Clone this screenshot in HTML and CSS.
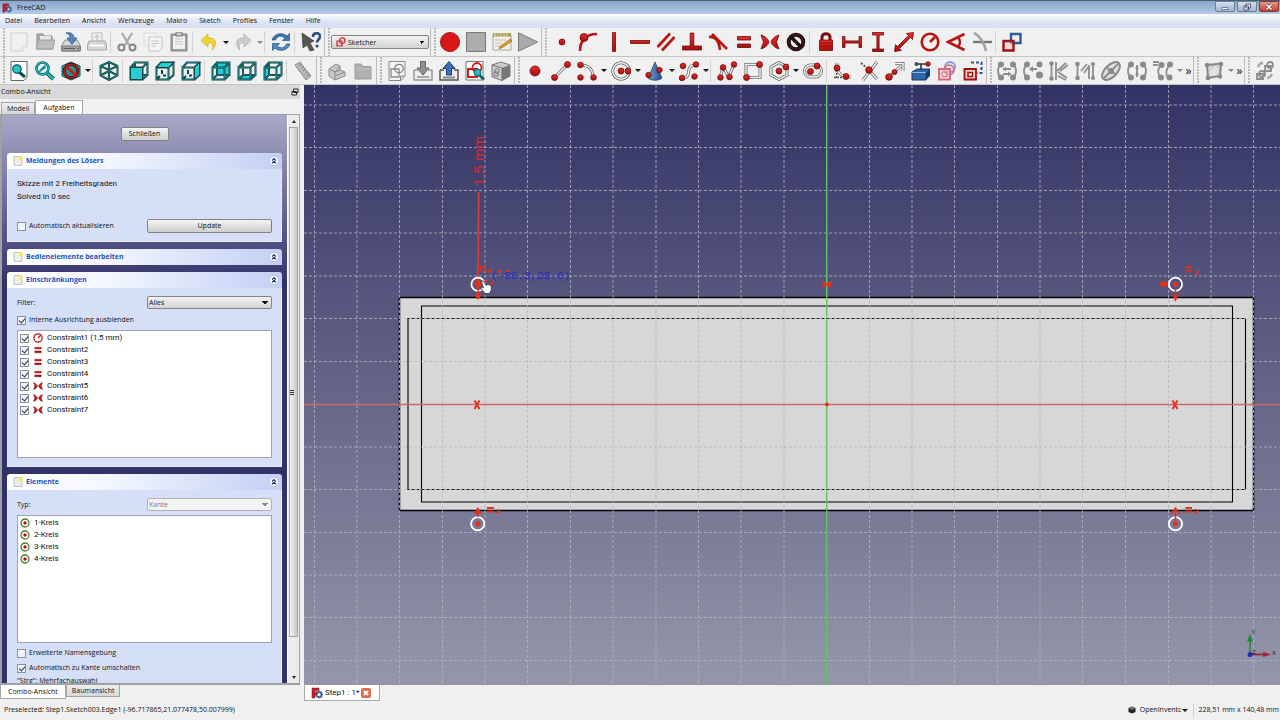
FILE: index.html
```html
<!DOCTYPE html>
<html lang="de">
<head>
<meta charset="utf-8">
<title>FreeCAD</title>
<link rel="stylesheet" href="styles.css">
</head>
<body>
<svg class="defs" aria-hidden="true">
  <defs>
    <linearGradient id="redg" x1="0" y1="0" x2="0" y2="1"><stop offset="0" stop-color="#ee2a2a"/><stop offset="1" stop-color="#a80c0c"/></linearGradient>
    <linearGradient id="blueg" x1="0" y1="0" x2="1" y2="0"><stop offset="0" stop-color="#6fa3d8"/><stop offset="1" stop-color="#1c4c86"/></linearGradient>
  </defs>
  <symbol id="logo" viewBox="0 0 12 12"><circle cx="8" cy="7.500" r="2.600" fill="none" stroke="#4a6a9c" stroke-width="2"/><path d="M8 3.500V5M8 10V11.500M4 7.500H5.500M10.500 7.500H12M5.200 4.700l1 1M10 9.500l1 1M10.800 4.700l-1 1" stroke="#4a6a9c" stroke-width="1.400"/><path d="M1 1H8V3.500H4V5.200H6V7.500H4V11H1Z" fill="#c4202c" stroke="#7a1018" stroke-width=".5"/></symbol>
  <symbol id="new" viewBox="0 0 20 20"><path d="M2 1H18V15L14 19H2Z" fill="#f0f0f0" stroke="#cfcfcf"/><path d="M14 19V15H18" fill="#fafafa" stroke="#d4d4d4"/></symbol>
  <symbol id="open" viewBox="0 0 20 20"><path d="M2 17V2H8L9 4H17V17Z" fill="#a9a9a9" stroke="#8c8c8c"/><path d="M5 8V4H16V9" fill="#e6e6e6"/><path d="M1 17L3 8H20L18 17Z" fill="#bdbdbd" stroke="#949494" stroke-width=".8"/></symbol>
  <symbol id="save" viewBox="0 0 20 20"><path d="M4 8H16L19.500 14V19H.5V14Z" fill="#d8d8d8" stroke="#777" stroke-width=".8"/><path d="M1 14H19V19H1Z" fill="#a5a5a5" stroke="#666" stroke-width=".7"/><path d="M2.500 16.500H14M16 16.500H17.500" stroke="#5c5c5c"/><path d="M5 1C10 0 13 2 13 6H16L11 12.500L6 6H9C9 3 8 2 5 1Z" fill="#5385bd" stroke="#2c5688" stroke-width=".7"/></symbol>
  <symbol id="print" viewBox="0 0 20 20"><path d="M5 1H15V10H5Z" fill="#eee" stroke="#bcbcbc"/><path d="M10 3V9M7.500 5.500L10 3L12.500 5.500" stroke="#b7b7b7" fill="none"/><path d="M2 9H18L19.500 13V18H.5V13Z" fill="#d5d5d5" stroke="#a8a8a8"/><path d="M3 13.500H17" stroke="#fff" stroke-width="2"/></symbol>
  <symbol id="cut" viewBox="0 0 20 20"><path d="M5 1L12 13M15 1L8 13" stroke="#aaa" stroke-width="2.200"/><circle cx="4.500" cy="15.500" r="3" fill="none" stroke="#858585" stroke-width="2"/><circle cx="15.500" cy="15.500" r="3" fill="none" stroke="#858585" stroke-width="2"/></symbol>
  <symbol id="copy" viewBox="0 0 20 20"><path d="M1 1H14V14H1Z" fill="#f1f1f1" stroke="#dcdcdc"/><path d="M6 5H19V16L16 19H6Z" fill="#f4f4f4" stroke="#c6c6c6"/><path d="M8.500 9H16M8.500 11.500H16M8.500 14H13" stroke="#c5c5c5"/></symbol>
  <symbol id="paste" viewBox="0 0 20 20"><path d="M2 2H18V19H2Z" fill="#9f9f9f" stroke="#868686"/><path d="M4 4H16V17H4Z" fill="#f0f0f0"/><path d="M7 0H13V4H7Z" fill="#c9c9c9" stroke="#777"/><path d="M6 7H14M6 9.500H14M6 12H14" stroke="#c8c8c8"/></symbol>
  <symbol id="undo" viewBox="0 0 20 20"><path d="M9 2L2 8.500L9 15V11C13 10 15 13 13 18C19 12 17 5 9 6Z" fill="#f0d430" stroke="#c9a81b" stroke-width=".7"/></symbol>
  <symbol id="redo" viewBox="0 0 20 20"><path d="M11 2L18 8.500L11 15V11C7 10 5 13 7 18C1 12 3 5 11 6Z" fill="#cbcbcb" stroke="#aaa" stroke-width=".7"/></symbol>
  <symbol id="refresh" viewBox="0 0 20 20"><path d="M1 8C3 1 12 0 16 4L18.500 1.500V8.500H11.500L14 6C10 3 6 4 4.500 8Z" fill="#3f74b5" stroke="#214d85" stroke-width=".7"/><path d="M19 12C17 19 8 20 4 16L1.500 18.500V11.500H8.500L6 14C10 17 14 16 15.500 12Z" fill="#5488c5" stroke="#214d85" stroke-width=".7"/></symbol>
  <symbol id="whats" viewBox="0 0 20 20"><path d="M1 1L13 9L9 11L13 18L9 19L6 13L2 16Z" fill="#555" stroke="#333" stroke-width=".6"/><path d="M12 5C12 0 19 0 19 4.500C19 7.500 16 7.500 16 10.500" fill="none" stroke="#2d4f7c" stroke-width="2.600"/><circle cx="16" cy="14" r="1.600" fill="#2d4f7c"/></symbol>
  <symbol id="sketch" viewBox="0 0 10 10"><path d="M1 4H6V9H1Z" fill="none" stroke="#d62222" stroke-width="1.200"/><circle cx="6.200" cy="3.700" r="2.800" fill="none" stroke="#d62222" stroke-width="1.200"/></symbol>
  <symbol id="rec" viewBox="0 0 20 20"><circle cx="10" cy="10" r="9.600" fill="#d81818" stroke="#8d1010" stroke-width=".8"/></symbol>
  <symbol id="stop" viewBox="0 0 20 20"><path d="M.5.500H19.500V19.500H.5Z" fill="#acacac" stroke="#777"/></symbol>
  <symbol id="note" viewBox="0 0 20 20"><path d="M1 3H19V18H1Z" fill="#f4f2e8" stroke="#a7a49b"/><path d="M1 1H19V4.500H1Z" fill="#a59a4d"/><path d="M3 1V4M6 1V4M9 1V4M12 1V4M15 1V4" stroke="#e9e3b0"/><path d="M3 8H14M3 11H10M3 14H8" stroke="#bbb"/><path d="M8 14.500L18.500 7L20 9L9.500 16L7 16.500Z" fill="#e3a02e" stroke="#8a5a18" stroke-width=".7"/></symbol>
  <symbol id="play" viewBox="0 0 20 20"><path d="M.5.800L19.500 10L.5 19.200Z" fill="#aaa" stroke="#777"/></symbol>
  <symbol id="c-point" viewBox="0 0 20 20"><circle class="r" cx="10" cy="10" r="3"/></symbol>
  <symbol id="c-on" viewBox="0 0 20 20"><path d="M2 19C2 9 8 2 19 2" class="rl"/><circle class="r" cx="6" cy="5.500" r="4"/></symbol>
  <symbol id="c-vert" viewBox="0 0 20 20"><path class="r" d="M8.500.500H11.500V19.500H8.500Z"/></symbol>
  <symbol id="c-horiz" viewBox="0 0 20 20"><path class="r" d="M.5 8.500H19.500V11.500H.5Z"/></symbol>
  <symbol id="c-par" viewBox="0 0 20 20"><path class="rl" d="M1.500 15L14 1.500M6 18.500L18.500 5"/></symbol>
  <symbol id="c-perp" viewBox="0 0 20 20"><path class="r" d="M8.200 1H11.800V14H19.500V18H.5V14H8.200Z"/></symbol>
  <symbol id="c-tan" viewBox="0 0 20 20"><path class="rl" d="M4 2L19 17M1 5C7 4 11 9 12 18"/></symbol>
  <symbol id="c-eq" viewBox="0 0 20 20"><path class="r" d="M3.500 4.500H16.500V8H3.500ZM3.500 12H16.500V15.500H3.500Z"/></symbol>
  <symbol id="c-sym" viewBox="0 0 20 20"><path class="r" d="M1 3C5 4 8 7 9 10C8 13 5 16 1 17L3.500 10ZM19 3C15 4 12 7 11 10C12 13 15 16 19 17L16.500 10Z"/></symbol>
  <symbol id="c-block" viewBox="0 0 20 20"><circle cx="10" cy="10" r="7.300" fill="#f5e9e9" stroke="#191111" stroke-width="4"/><circle cx="10" cy="10" r="7.300" fill="none" stroke="#5d1616" stroke-width="1.200"/><path d="M5 5L15 15" stroke="#191111" stroke-width="3.500"/></symbol>
  <symbol id="c-lock" viewBox="0 0 20 20"><path d="M6 9V5C6 .5 14 .5 14 5V9" fill="none" stroke="#7d0d0d" stroke-width="3"/><path class="r" d="M3.500 8H16.500V18.500H3.500Z"/><path d="M4.500 11H15.500M4.500 14H15.500" stroke="#7f0b0b" stroke-width=".8"/></symbol>
  <symbol id="c-dx" viewBox="0 0 20 20"><path class="r" d="M.5 4.500H3V8.900H17V4.500H19.500V15.500H17V11.100H3V15.500H.5Z"/></symbol>
  <symbol id="c-dy" viewBox="0 0 20 20"><path class="r" d="M4.500 .5H15.500V3H11.100V17H15.500V19.500H4.500V17H8.900V3H4.500Z"/></symbol>
  <symbol id="c-dist" viewBox="0 0 20 20"><path class="r" d="M19.500.500L18.500 7.500L16.500 5.500L5.500 16.500L7.500 18.500L.5 19.500L1.500 12.500L3.500 14.500L14.500 3.500L12.500 1.500Z"/></symbol>
  <symbol id="c-rad" viewBox="0 0 20 20"><circle cx="10" cy="10" r="8.300" class="rl nf"/><path d="M10 10L15 5" class="rl"/></symbol>
  <symbol id="c-ang" viewBox="0 0 20 20"><path d="M18.500 2L2 10L18.500 18M12 5.500C14.500 8 14.500 12 12 15" class="rl nf"/></symbol>
  <symbol id="c-snell" viewBox="0 0 20 20"><path d="M1 10H20" stroke="#777" stroke-width="2.400"/><path d="M2 1C7 3 13 12 14 19" stroke="#a2a2a2" stroke-width="2.600" fill="none"/></symbol>
  <symbol id="toggle" viewBox="0 0 20 20"><path d="M9 2H18.500V11H9Z" fill="none" stroke="#2c5c94" stroke-width="2.400"/><path d="M1.500 9H11.500V18.500H1.500Z" fill="#ecc9c9" fill-opacity=".6" stroke="#a01212" stroke-width="2.400"/></symbol>

  <symbol id="fitall" viewBox="0 0 20 20"><path d="M2 .5H18V16L15 19.500H2Z" fill="#fff" stroke="#666"/><path d="M10 11L16 16" stroke="#0b4f52" stroke-width="3"/><circle cx="8" cy="8" r="4.200" fill="#2cc4c4" stroke="#0f5a5c" stroke-width="1.300"/></symbol>
  <symbol id="fitsel" viewBox="0 0 20 20"><path d="M11 11L18.500 18" stroke="#0b5557" stroke-width="4"/><path d="M11 11L18.500 18" stroke="#2cc4c4" stroke-width="2"/><circle cx="7.500" cy="7.500" r="6" fill="#e5fafa" stroke="#0c6265" stroke-width="2.600"/><circle cx="7.500" cy="7.500" r="6" fill="none" stroke="#27b5b8" stroke-width="1.200"/><path d="M3.500 10L10 3.500L11 7L5 11Z" fill="#1c8a8d"/></symbol>
  <symbol id="style" viewBox="0 0 20 20"><path d="M1 5L10 1L19 5V15L10 19L1 15Z" fill="#23b5b8" stroke="#0b5557"/><circle cx="10" cy="10" r="6.800" fill="#2b9090" stroke="#3c0c0c" stroke-width="3"/><circle cx="10" cy="10" r="6.800" fill="none" stroke="#c41818" stroke-width="1.600"/><path d="M5 5.500L15 14.500" stroke="#c41818" stroke-width="2.400"/></symbol>
  <symbol id="wire" viewBox="0 0 20 20"><path class="ck" d="M1.500 6.500H13.500V18.500H1.500ZM6 1.500H18.500V14H6ZM1.500 6.500L6 1.500M13.500 6.500L18.500 1.500M13.500 18.500L18.500 14M1.500 18.500L6 14"/><path class="cl" d="M1.500 6.500H13.500V18.500H1.500ZM6 1.500H18.500V14H6ZM1.500 6.500L6 1.500M13.500 6.500L18.500 1.500M13.500 18.500L18.500 14M1.500 18.500L6 14"/></symbol>
  <symbol id="stub" viewBox="0 0 20 20"><path class="ck" d="M1.500 6.500H13.500V18.500H1.500ZM1.500 6.500L6 1.500H18.500L13.500 6.500M18.500 1.500V14L13.500 18.500M2 18L5 15M7 9V13M8 14.500H11"/><path class="cl" d="M1.500 6.500H13.500V18.500H1.500ZM1.500 6.500L6 1.500H18.500L13.500 6.500M18.500 1.500V14L13.500 18.500"/></symbol>
  <symbol id="v-iso" viewBox="0 0 20 20"><path class="ck" d="M10 1L18.500 5V14.500L10 19L1.500 14.500V5ZM1.500 5L10 9L18.500 5M10 9V19M10 1V9M1.500 14.500L10 10L18.500 14.500"/><path class="cl" d="M10 1L18.500 5V14.500L10 19L1.500 14.500V5ZM1.500 5L10 9L18.500 5M10 9V19M10 1V9M1.500 14.500L10 10L18.500 14.500"/></symbol>
  <symbol id="v-front" viewBox="0 0 20 20"><use href="#wire"/><path class="cf" d="M1.500 6.500H13.500V18.500H1.500Z"/></symbol>
  <symbol id="v-top" viewBox="0 0 20 20"><use href="#stub"/><path class="cf" d="M1.500 6.500L6 1.500H18.500L13.500 6.500Z"/></symbol>
  <symbol id="v-right" viewBox="0 0 20 20"><use href="#stub"/><path class="cf" d="M13.500 6.500L18.500 1.500V14L13.500 18.500Z"/></symbol>
  <symbol id="v-rear" viewBox="0 0 20 20"><path class="cf" d="M6 1.500H18.500V14H6Z"/><use href="#wire"/></symbol>
  <symbol id="v-bottom" viewBox="0 0 20 20"><path class="cf" d="M1.500 18.500L6 14H18.500L13.500 18.500Z"/><use href="#wire"/></symbol>
  <symbol id="v-left" viewBox="0 0 20 20"><path class="cf" d="M1.500 6.500L6 1.500V14L1.500 18.500Z"/><use href="#wire"/></symbol>
  <symbol id="ruler" viewBox="0 0 20 20"><path d="M2 4L7 1L18 15L13 19Z" fill="#b7b7b7" stroke="#8c8c8c"/><path d="M8.500 3L6 5M10.500 5.500L8.500 7M12.500 8L10 10M14.500 10.500L12.500 12M16.500 13L14 15" stroke="#777"/></symbol>
  <symbol id="part" viewBox="0 0 20 20"><path d="M2 8L9 3L13 5V9L18 11V15L8 19L2 15Z" fill="#c7c7c7" stroke="#8b8b8b"/><path d="M2 8L8 11V19M8 11L13 9M8 15L18 11M8 11L13 5" fill="none" stroke="#8b8b8b"/></symbol>
  <symbol id="folder" viewBox="0 0 20 20"><path d="M2 3H8L10 5.500H18V18H2Z" fill="#b0b0b0" stroke="#9b9b9b"/><path d="M2.500 8H17.500" stroke="#c7c7c7"/></symbol>
  <symbol id="s-new" viewBox="0 0 20 20"><path d="M2 .5H18V15L14 19.500H2Z" fill="#f4f4f4" stroke="#888"/><path d="M4 8H12V16H4Z" fill="none" stroke="#888" stroke-width="1.300"/><circle cx="12" cy="7.500" r="4.200" fill="none" stroke="#888" stroke-width="1.300"/><path d="M13.500 19V15H18" fill="#ddd" stroke="#888"/></symbol>
  <symbol id="s-leave" viewBox="0 0 20 20"><path d="M1 9H5M15 9H19V19H1V9" fill="#eee" stroke="#999" stroke-width="1.500"/><path d="M4 16H16" stroke="#aaa" stroke-width="2"/><path d="M7.500.500H12.500V7H16L10 14L4 7H7.500Z" fill="#909090" stroke="#666"/></symbol>
  <symbol id="s-view" viewBox="0 0 20 20"><path d="M1 9H5M15 9H19V19H1V9" fill="#eee" stroke="#555" stroke-width="1.500"/><path d="M4 16.500H16" stroke="#888" stroke-width="2"/><path d="M7.500 14H12.500V7.500H16L10 .5L4 7.500H7.500Z" fill="#3d73b5" stroke="#173c6b"/></symbol>
  <symbol id="s-map" viewBox="0 0 20 20"><path d="M1 .5H18V19H1Z" fill="#fff" stroke="#777"/><path d="M3 8H12V16H3Z" fill="none" stroke="#cf1c1c" stroke-width="2"/><circle cx="12" cy="6.500" r="4.500" fill="none" stroke="#cf1c1c" stroke-width="1.800"/><path d="M13 13L19 18.500" stroke="#0c6467" stroke-width="3"/><circle cx="12.500" cy="11.500" r="3.500" fill="#27b5b8" stroke="#0c6467"/></symbol>
  <symbol id="s-box" viewBox="0 0 20 20"><path d="M1 4L10 1L19 4V15L11 19.500L1 16Z" fill="#ccc" stroke="#777"/><path d="M11 7L19 4V15L11 19.500Z" fill="#777"/><path d="M1 4L11 7V19.500" fill="none" stroke="#777"/><circle cx="6" cy="10" r="2.300" fill="none" stroke="#777"/><path d="M3 11H7V15H3Z" fill="none" stroke="#777"/></symbol>
  <symbol id="g-point" viewBox="0 0 20 20"><circle class="r" cx="10" cy="10" r="5"/></symbol>
  <symbol id="g-line" viewBox="0 0 20 20"><path class="ok" d="M3 17L17 3"/><path class="ow" d="M3 17L17 3"/><circle class="r" cx="3.500" cy="16.500" r="3"/><circle class="r" cx="16.500" cy="3.500" r="3"/></symbol>
  <symbol id="g-arc" viewBox="0 0 20 20"><path class="ok" d="M4 4C12 4 16 9 16 16"/><path class="ow" d="M4 4C12 4 16 9 16 16"/><circle class="r" cx="3.500" cy="4" r="2.800"/><circle class="r" cx="16.500" cy="16.500" r="2.800"/><circle class="r" cx="3.500" cy="16.500" r="2.800"/></symbol>
  <symbol id="g-circle" viewBox="0 0 20 20"><circle class="ok" cx="10" cy="10" r="8.300"/><circle class="ow" cx="10" cy="10" r="8.300"/><circle class="r" cx="10" cy="10" r="3"/><circle class="r" cx="17" cy="10" r="3"/></symbol>
  <symbol id="g-cone" viewBox="0 0 20 20"><path d="M10 1L17 17C14 20 6 20 3 17Z" fill="url(#blueg)" stroke="#123461" stroke-width=".7"/><circle class="r" cx="14.500" cy="9" r="2.700"/><circle class="r" cx="3.500" cy="14" r="2.700"/></symbol>
  <symbol id="g-spline" viewBox="0 0 20 20"><path class="ok" d="M3 17C15 17 4 4 17 4"/><path class="ow" d="M3 17C15 17 4 4 17 4"/><circle class="r" cx="3" cy="17" r="2.800"/><circle class="r" cx="17" cy="3.500" r="2.800"/><circle class="r" cx="4" cy="5" r="2.800"/><circle class="r" cx="15.500" cy="15.500" r="2.800"/></symbol>
  <symbol id="g-poly" viewBox="0 0 20 20"><path class="ok" d="M3 17L6 6L12 16L17 3"/><path class="ow" d="M3 17L6 6L12 16L17 3"/><circle class="r" cx="3.500" cy="16.500" r="2.800"/><circle class="r" cx="6" cy="6.500" r="2.800"/><circle class="r" cx="12.500" cy="16" r="2.800"/><circle class="r" cx="17" cy="3.500" r="2.800"/></symbol>
  <symbol id="g-rect" viewBox="0 0 20 20"><path class="ok" d="M3 3.500H17V16.500H3Z"/><path class="ow" d="M3 3.500H17V16.500H3Z"/><circle class="r" cx="3.500" cy="16.500" r="3"/><circle class="r" cx="16.500" cy="3.500" r="3"/></symbol>
  <symbol id="g-hex" viewBox="0 0 20 20"><path class="ok" d="M10 1.500L18 6V14L10 18.500L2 14V6Z"/><path class="ow" d="M10 1.500L18 6V14L10 18.500L2 14V6Z"/><circle class="r" cx="10" cy="10" r="3"/><circle class="r" cx="17" cy="6" r="3"/></symbol>
  <symbol id="g-slot" viewBox="0 0 20 20"><rect class="ok" x="1.500" y="4" width="17" height="12" rx="6"/><rect class="ow" x="1.500" y="4" width="17" height="12" rx="6"/><circle class="r" cx="7.500" cy="10.500" r="3"/><circle class="r" cx="14" cy="5" r="3"/></symbol>
  <symbol id="g-fillet" viewBox="0 0 20 20"><path class="ok" d="M4 2C3 12 8 16 18 16"/><path class="ow" d="M4 2C3 12 8 16 18 16"/><path d="M3.500 9V17M1 16.500H12" stroke="#555" stroke-width="1.500" stroke-dasharray="2 1"/><circle class="r" cx="4" cy="7" r="3"/><circle class="r" cx="13" cy="15.500" r="3"/></symbol>
  <symbol id="g-trim" viewBox="0 0 20 20"><path class="ok" d="M18 1L4 19M9 8L18 18"/><path class="ow" d="M18 1L4 19M9 8L18 18"/><path d="M2 2L9 8" stroke="#555" stroke-width="1.800" stroke-dasharray="2 1.500"/><circle class="r" cx="10" cy="9" r="3.300"/></symbol>
  <symbol id="g-extend" viewBox="0 0 20 20"><path class="ok" d="M4 16L16 5M10 2.500H18V10"/><path class="ow" d="M4 16L16 5M10 2.500H18V10"/><circle class="r" cx="4" cy="16" r="3.300"/><circle class="r" cx="9.500" cy="11" r="2.500"/></symbol>
  <symbol id="g-ext" viewBox="0 0 20 20"><path d="M1 11L6 8H19L15 12V19H1Z" fill="#2e68a8" stroke="#173c6b"/><path d="M15 12L19 8V15L15 19Z" fill="#173c6b"/><path d="M1 11.500H15" stroke="#8fb6dd"/><path d="M10 9V3M5 3H17" stroke="#333" stroke-width="1.600"/><circle cx="5.500" cy="3" r="2" fill="#355"/><circle class="r" cx="17" cy="3" r="2.300"/></symbol>
  <symbol id="g-carbon" viewBox="0 0 20 20"><circle cx="13" cy="6" r="5" fill="#dde3f5" stroke="#8b9bdc" stroke-width="2"/><circle cx="12" cy="9" r="5" fill="none" stroke="#d86a7a" stroke-width="1.500"/><path d="M2 8H13V18.500H2Z" fill="#f0cfd4" fill-opacity=".6" stroke="#d86a7a" stroke-width="2"/><path d="M5 11H10V15.500H5Z" fill="none" stroke="#d86a7a"/></symbol>
  <symbol id="g-constr" viewBox="0 0 20 20"><path d="M8 1.500H18.500V12H14" fill="none" stroke="#2c5c94" stroke-width="2.200" stroke-dasharray="3 2"/><path d="M1.500 8H13V18.500H1.500Z" fill="#f6caca" stroke="#a01212" stroke-width="1.800"/><path d="M5 11.500H9.500V15.500H5Z" fill="#fff" stroke="#a01212" stroke-width="1.500"/></symbol>
  <symbol id="k-close" viewBox="0 0 20 20"><path class="gl" d="M4 3C0 7 0 13 4 17M16 3C20 7 20 13 16 17M6 8H14M14 13H6"/><g class="gd"><circle cx="4" cy="3.500" r="3"/><circle cx="16" cy="3.500" r="3"/><circle cx="4" cy="16.500" r="3"/><circle cx="16" cy="16.500" r="3"/><path d="M6 8L9 5.500V10.500ZM14 13L11 10.500V15.500Z"/></g></symbol>
  <symbol id="k-conn" viewBox="0 0 20 20"><path class="gl" d="M4 3C0 7 0 13 4 17M7 8H14"/><g class="gd"><circle cx="4" cy="3.500" r="3"/><circle cx="16.500" cy="3.500" r="3"/><circle cx="4" cy="16.500" r="3"/><circle cx="16.500" cy="14" r="3.500"/><path d="M6 8L10 5V11Z"/></g></symbol>
  <symbol id="k-selc" viewBox="0 0 20 20"><path class="gl" d="M2.500 1V19M7 1V19M8 10L17 2M11 10L19 4M9 11L18 17M9 15L17 19"/><g class="gd"><circle cx="2.500" cy="2.500" r="2.200"/><circle cx="2.500" cy="17.500" r="2.200"/></g></symbol>
  <symbol id="k-elem" viewBox="0 0 20 20"><path class="gl" d="M2.500 2V18M18 2V18M6 10L12 3M9 12L14 5M14 4V18"/><g class="gd"><circle cx="2.500" cy="3" r="2.300"/><circle cx="2.500" cy="17" r="2.300"/><circle cx="18" cy="3" r="2"/><circle cx="18" cy="17" r="2"/></g></symbol>
  <symbol id="k-ell" viewBox="0 0 20 20"><ellipse cx="10" cy="10" rx="11" ry="6" transform="rotate(-45 10 10)" fill="#ddd" stroke="#888" stroke-width="2"/><path class="gl" d="M3 17L17 3M6 7L14 13"/><circle class="gd" cx="10" cy="10" r="3"/></symbol>
  <symbol id="k-sym" viewBox="0 0 20 20"><path class="gl" d="M4 3C0 7 0 13 4 17M16 3C20 7 20 13 16 17M10 4V16"/><g class="gd"><circle cx="4" cy="3.500" r="3"/><circle cx="16" cy="3.500" r="3"/><circle cx="4" cy="16.500" r="3"/><circle cx="16" cy="16.500" r="3"/><circle cx="10" cy="7" r="1.600"/><circle cx="10" cy="13" r="1.600"/></g></symbol>
  <symbol id="k-clone" viewBox="0 0 20 20"><path class="gl" d="M0 1H6M0 4H5M7 5C4 9 5 14 8 17M17 4C13 7 12 13 15 17"/><g class="gd"><circle cx="8.500" cy="4" r="3"/><circle cx="17" cy="3.500" r="3"/><circle cx="8" cy="16.500" r="3"/><circle cx="16.500" cy="16.500" r="3"/></g></symbol>
  <symbol id="k-surf" viewBox="0 0 20 20"><path d="M3 4L17 2.500L16 15L4 17Z" fill="#d5d5d5" stroke="#888" stroke-width="2"/><path d="M6 12L12 6M7 14L14 7M10 14L14 10" stroke="#fff"/><g class="gd"><circle cx="3" cy="4" r="2.300"/><circle cx="17" cy="3" r="2.300"/><circle cx="4" cy="17" r="2.300"/><circle cx="16" cy="15.500" r="2.300"/></g></symbol>
  <symbol id="k-virt" viewBox="0 0 20 20"><path d="M3 6C4 3 6 2 8 2M12 17C15 17 16 15 17 13" stroke="#aaa" stroke-width="2.500" fill="none"/><path class="gl" d="M10 5H16V10H10ZM2 13H8V18H2Z"/><circle class="gl" cx="15" cy="4" r="3"/><circle class="gl" cx="7" cy="13" r="3"/></symbol>
  <symbol id="paper" viewBox="0 0 10 10"><path d="M1 .5H9V9.500H1Z" fill="#eeeee4" stroke="#b5b5b5" stroke-width=".8"/><circle cx="7.500" cy="2.300" r="2.200" fill="#f4ec6a"/></symbol>
  <symbol id="up2" viewBox="0 0 10 10"><circle cx="5" cy="5" r="4.600" fill="#fff" stroke="#9fb2dc" stroke-width=".6"/><path d="M3 4.700L5 2.700L7 4.700M3 7.400L5 5.400L7 7.400" fill="none" stroke="#15276b" stroke-width="1.200"/></symbol>
  <symbol id="kreis" viewBox="0 0 10 10"><circle cx="5" cy="5" r="4" fill="#fff" stroke="#4f7a28" stroke-width="1.300"/><circle cx="5" cy="5" r="1.700" fill="#b51313"/></symbol>
</svg>

<header class="titlebar">
  <svg class="i10"><use href="#logo"/></svg><span>FreeCAD</span>
  <div class="wbtns">
    <button aria-label="Minimieren"><svg viewBox="0 0 18 10"><path d="M6 5.500H12V7.500H6Z" fill="#fff" stroke="#556" stroke-width=".7"/></svg></button>
    <button aria-label="Verkleinern"><svg viewBox="0 0 18 10"><path d="M8 2H12.500V6H8ZM6 4H10.500V8H6Z" fill="#fff" stroke="#445" stroke-width=".9"/></svg></button>
    <button class="close" aria-label="Beenden"><svg viewBox="0 0 18 10"><path d="M6.500 2.500L11.500 7.500M11.500 2.500L6.500 7.500" stroke="#5a2222" stroke-width="2.600"/><path d="M6.500 2.500L11.500 7.500M11.500 2.500L6.500 7.500" stroke="#fff" stroke-width="1.600"/></svg></button>
  </div>
</header>
<nav class="menubar">
  <button>Datei</button><button>Bearbeiten</button><button>Ansicht</button><button>Werkzeuge</button><button>Makro</button><button>Sketch</button><button>Profiles</button><button>Fenster</button><button>Hilfe</button>
</nav>

<div class="toolrow">
  <div class="toolbar">
    <button aria-label="Neu"><svg><use href="#new"/></svg></button><button aria-label="Öffnen"><svg><use href="#open"/></svg></button><button aria-label="Speichern"><svg><use href="#save"/></svg></button><button aria-label="Drucken"><svg><use href="#print"/></svg></button><i class="sep"></i>
    <button aria-label="Ausschneiden"><svg><use href="#cut"/></svg></button><button aria-label="Kopieren"><svg><use href="#copy"/></svg></button><button aria-label="Einfügen"><svg><use href="#paste"/></svg></button><i class="sep"></i>
    <button aria-label="Rückgängig"><svg><use href="#undo"/></svg></button><button class="drop" aria-label="Rückgängig Liste"></button><button aria-label="Wiederholen"><svg><use href="#redo"/></svg></button><button class="drop dim" aria-label="Wiederholen Liste"></button><i class="sep"></i>
    <button aria-label="Aktualisieren"><svg><use href="#refresh"/></svg></button><i class="sep"></i><button aria-label="Direkthilfe"><svg><use href="#whats"/></svg></button>
  </div>
  <div class="toolbar">
    <label class="bench"><svg class="i10"><use href="#sketch"/></svg><select aria-label="Arbeitsbereich"><option>Sketcher</option></select></label>
  </div>
  <div class="toolbar">
    <button aria-label="Aufzeichnen"><svg><use href="#rec"/></svg></button><button aria-label="Stopp"><svg><use href="#stop"/></svg></button><button aria-label="Makros"><svg><use href="#note"/></svg></button><button aria-label="Ausführen"><svg><use href="#play"/></svg></button>
  </div>
  <div class="toolbar last">
    <button aria-label="Koinzidenz"><svg><use href="#c-point"/></svg></button><button aria-label="Punkt auf Objekt"><svg><use href="#c-on"/></svg></button><button aria-label="Vertikal"><svg><use href="#c-vert"/></svg></button><button aria-label="Horizontal"><svg><use href="#c-horiz"/></svg></button><button aria-label="Parallel"><svg><use href="#c-par"/></svg></button><button aria-label="Rechtwinklig"><svg><use href="#c-perp"/></svg></button><button aria-label="Tangente"><svg><use href="#c-tan"/></svg></button><button aria-label="Gleich"><svg><use href="#c-eq"/></svg></button><button aria-label="Symmetrisch"><svg><use href="#c-sym"/></svg></button><button aria-label="Blockieren"><svg><use href="#c-block"/></svg></button><i class="sep"></i>
    <button aria-label="Sperren"><svg><use href="#c-lock"/></svg></button><button aria-label="Horizontaler Abstand"><svg><use href="#c-dx"/></svg></button><button aria-label="Vertikaler Abstand"><svg><use href="#c-dy"/></svg></button><button aria-label="Abstand"><svg><use href="#c-dist"/></svg></button><button aria-label="Radius"><svg><use href="#c-rad"/></svg></button><button aria-label="Winkel"><svg><use href="#c-ang"/></svg></button><button aria-label="Brechung"><svg><use href="#c-snell"/></svg></button><i class="sep"></i><button aria-label="Festlegend umschalten"><svg><use href="#toggle"/></svg></button>
  </div>
</div>

<div class="toolrow second">
  <div class="toolbar">
    <button aria-label="Alles einpassen"><svg><use href="#fitall"/></svg></button><button aria-label="Auswahl einpassen"><svg><use href="#fitsel"/></svg></button><button aria-label="Darstellung"><svg><use href="#style"/></svg></button><button class="drop" aria-label="Darstellung Liste"></button><i class="sep"></i>
    <button aria-label="Axonometrisch"><svg><use href="#v-iso"/></svg></button><i class="sep"></i>
    <button aria-label="Vorne"><svg><use href="#v-front"/></svg></button><button aria-label="Oben"><svg><use href="#v-top"/></svg></button><button aria-label="Rechts"><svg><use href="#v-right"/></svg></button><i class="sep"></i>
    <button aria-label="Hinten"><svg><use href="#v-rear"/></svg></button><button aria-label="Unten"><svg><use href="#v-bottom"/></svg></button><button aria-label="Links"><svg><use href="#v-left"/></svg></button><i class="sep"></i>
    <button aria-label="Messen"><svg><use href="#ruler"/></svg></button>
  </div>
  <div class="toolbar"><button aria-label="Teil"><svg><use href="#part"/></svg></button><button aria-label="Gruppe"><svg><use href="#folder"/></svg></button></div>
  <div class="toolbar"><button aria-label="Neue Skizze"><svg><use href="#s-new"/></svg></button><button aria-label="Skizze bearbeiten"><svg><use href="#s-leave"/></svg></button><button aria-label="Skizze verlassen"><svg><use href="#s-view"/></svg></button><button aria-label="Skizze anzeigen"><svg><use href="#s-map"/></svg></button><button aria-label="Skizze zuordnen"><svg><use href="#s-box"/></svg></button></div>
  <div class="toolbar">
    <button aria-label="Punkt"><svg><use href="#g-point"/></svg></button><button aria-label="Linie"><svg><use href="#g-line"/></svg></button><button aria-label="Bogen"><svg><use href="#g-arc"/></svg></button><button class="drop" aria-label="Bogen Liste"></button><button aria-label="Kreis"><svg><use href="#g-circle"/></svg></button><button class="drop" aria-label="Kreis Liste"></button><button aria-label="Kegelschnitt"><svg><use href="#g-cone"/></svg></button><button class="drop" aria-label="Kegelschnitt Liste"></button><button aria-label="B-Spline"><svg><use href="#g-spline"/></svg></button><button class="drop" aria-label="B-Spline Liste"></button><i class="sep"></i>
    <button aria-label="Linienzug"><svg><use href="#g-poly"/></svg></button><button aria-label="Rechteck"><svg><use href="#g-rect"/></svg></button><button aria-label="Polygon"><svg><use href="#g-hex"/></svg></button><button class="drop" aria-label="Polygon Liste"></button><button aria-label="Nut"><svg><use href="#g-slot"/></svg></button><i class="sep"></i>
    <button aria-label="Abrunden"><svg><use href="#g-fillet"/></svg></button><button aria-label="Trimmen"><svg><use href="#g-trim"/></svg></button><button aria-label="Verlängern"><svg><use href="#g-extend"/></svg></button><button aria-label="Externe Geometrie"><svg><use href="#g-ext"/></svg></button><button aria-label="Kopie"><svg><use href="#g-carbon"/></svg></button><button aria-label="Konstruktion"><svg><use href="#g-constr"/></svg></button>
  </div>
  <div class="toolbar">
    <button aria-label="Form schließen"><svg><use href="#k-close"/></svg></button><button aria-label="Kanten verbinden"><svg><use href="#k-conn"/></svg></button><button aria-label="Constraints wählen"><svg><use href="#k-selc"/></svg></button><button aria-label="Elemente wählen"><svg><use href="#k-elem"/></svg></button><button aria-label="Interne Geometrie"><svg><use href="#k-ell"/></svg></button><button aria-label="Symmetrie"><svg><use href="#k-sym"/></svg></button><button aria-label="Klonen"><svg><use href="#k-clone"/></svg></button><button class="drop dim" aria-label="Klonen Liste"></button><button class="more">»</button>
  </div>
  <div class="toolbar"><button aria-label="B-Spline Werkzeuge"><svg><use href="#k-surf"/></svg></button><button class="drop dim" aria-label="B-Spline Werkzeuge Liste"></button><button class="more">»</button></div>
  <div class="toolbar last"><button aria-label="Virtueller Raum"><svg><use href="#k-virt"/></svg></button></div>
</div>

<main class="work">
  <aside class="dock">
    <div class="docktitle"><span>Combo-Ansicht</span><button aria-label="Abdocken"><svg viewBox="0 0 8 8"><path d="M2.500 1H7V4.500H2.500ZM1 3.500H5.500V7H1Z" fill="#eee" stroke="#222"/></svg></button></div>
    <div class="tabs"><button>Modell</button><button class="on">Aufgaben</button></div>
    <div class="frame">
      <div class="tasks">
        <button class="push closebtn">Schließen</button>
        <section class="group">
          <h2><svg class="i10"><use href="#paper"/></svg>Meldungen des Lösers<svg class="i10 end"><use href="#up2"/></svg></h2>
          <div class="body">
            <p class="msg">Skizze mit 2 Freiheitsgraden</p><p class="msg">Solved in 0 sec</p>
            <div class="pair top"><label class="chk"><input type="checkbox">Automatisch aktualisieren</label><button class="push">Update</button></div>
          </div>
        </section>
        <section class="group"><h2><svg class="i10"><use href="#paper"/></svg>Bedienelemente bearbeiten<svg class="i10 end"><use href="#up2"/></svg></h2></section>
        <section class="group">
          <h2><svg class="i10"><use href="#paper"/></svg>Einschränkungen<svg class="i10 end"><use href="#up2"/></svg></h2>
          <div class="body">
            <div class="pair"><label for="filter">Filter:</label><select id="filter"><option>Alles</option></select></div>
            <label class="chk mid"><input type="checkbox" checked>Interne Ausrichtung ausblenden</label>
            <ul class="list">
              <li><label><input type="checkbox" checked><svg class="i10"><use href="#c-rad"/></svg>Constraint1 (1,5 mm)</label></li>
              <li><label><input type="checkbox" checked><svg class="i10"><use href="#c-eq"/></svg>Constraint2</label></li>
              <li><label><input type="checkbox" checked><svg class="i10"><use href="#c-eq"/></svg>Constraint3</label></li>
              <li><label><input type="checkbox" checked><svg class="i10"><use href="#c-eq"/></svg>Constraint4</label></li>
              <li><label><input type="checkbox" checked><svg class="i10"><use href="#c-sym"/></svg>Constraint5</label></li>
              <li><label><input type="checkbox" checked><svg class="i10"><use href="#c-sym"/></svg>Constraint6</label></li>
              <li><label><input type="checkbox" checked><svg class="i10"><use href="#c-sym"/></svg>Constraint7</label></li>
            </ul>
          </div>
        </section>
        <section class="group">
          <h2><svg class="i10"><use href="#paper"/></svg>Elemente<svg class="i10 end"><use href="#up2"/></svg></h2>
          <div class="body">
            <div class="pair"><label for="typ">Typ:</label><select id="typ" disabled><option>Kante</option></select></div>
            <ul class="list elems">
              <li><svg class="i10"><use href="#kreis"/></svg>1-Kreis</li><li><svg class="i10"><use href="#kreis"/></svg>2-Kreis</li><li><svg class="i10"><use href="#kreis"/></svg>3-Kreis</li><li><svg class="i10"><use href="#kreis"/></svg>4-Kreis</li>
            </ul>
            <label class="chk low"><input type="checkbox">Erweiterte Namensgebung</label>
            <label class="chk low"><input type="checkbox" checked>Automatisch zu Kante umschalten</label>
            <p>"Strg": Mehrfachauswahl</p>
          </div>
        </section>
      </div>
      <div class="scroll"><button class="up" aria-label="Nach oben"></button><div class="thumb"></div><button class="down" aria-label="Nach unten"></button></div>
    </div>
    <div class="tabs bottom"><button class="on">Combo-Ansicht</button><button>Baumansicht</button></div>
  </aside>
  <div class="split"><i></i><i></i><i></i></div>
  <section class="mdi">
    <svg class="canvas" viewBox="304 85 976 600" preserveAspectRatio="xMidYMid slice">
      <path d="M400 297H1254V511H400Z" fill="#d7d7d7"/>
      <path d="M399.500 297.500H1253.500V510.500H399.500Z" fill="none" stroke="#000" stroke-width="1.500"/>
      <path d="M421.500 306H1232.500V502H421.500Z" fill="none" stroke="#000" stroke-width="1.100"/>
      <path d="M408 318.500H1245.500V489.500H408Z" fill="none" stroke="#111" stroke-width="1.200"/>
      <g fill="none" stroke="#b4b4be" stroke-opacity=".8" stroke-width="1" stroke-dasharray="3 2">
        <path d="M304 105H1280M304 147.500H1280M304 190.500H1280M304 233H1280M304 276H1280M304 318.500H1280M304 361.500H1280M304 447H1280M304 489.500H1280M304 532.500H1280M304 575H1280M304 617.500H1280M304 660.500H1280"/>
        <path d="M314.500 85V685M357 85V685M399.500 85V685M442.500 85V685M485 85V685M527.500 85V685M570.500 85V685M613 85V685M656 85V685M698.500 85V685M741 85V685M784 85V685M869.500 85V685M912 85V685M954.500 85V685M997.500 85V685M1040 85V685M1082.500 85V685M1125.500 85V685M1168.500 85V685M1211 85V685M1253.500 85V685"/>
      </g>
      <path d="M304 404.500H1280" stroke="#d0696d" stroke-width="1.300"/>
      <path d="M826.700 85V685" stroke="#62c465" stroke-width="1.400"/>
      <circle cx="827" cy="404.500" r="2" fill="#e6301c"/>
      <path d="M822.500 281L827 283.500L831.500 281V288L827 285.500L822.500 288Z" fill="#e6301c"/>
      <path stroke="#e0321f" stroke-width="2" fill="none" d="M474.500 400.500L479.500 409M479.500 400.500L474.500 409M1172.500 400.500L1177.500 409M1177.500 400.500L1172.500 409"/>
      <path d="M478.700 192L478 280" stroke="#d83a3c" stroke-width="1.700" fill="none"/>
      <text class="dim-text" transform="translate(484 186) rotate(-90)">1.5 mm</text>
      <g fill="none" stroke="#fff" stroke-width="1.800"><circle cx="478" cy="284.300" r="6.600"/><circle cx="1175.500" cy="284.300" r="6.600"/><circle cx="477.700" cy="523.800" r="6.600"/><circle cx="1175.500" cy="523.800" r="6.600"/></g>
      <g fill="#e6301c"><path d="M478 279L482 284L478 289.500L474 284Z"/><circle cx="1175.500" cy="284.300" r="2.600"/><circle cx="477.700" cy="523.800" r="2.600"/><circle cx="1175.500" cy="523.800" r="2.600"/><path d="M474.500 295L478 293.500L481.500 295L478 300ZM1159 284L1163 280.500V287.500ZM1162 282H1167V286.500H1162ZM477.700 507L482 514H473.500ZM478 289H479V295H477Z"/></g>
      <g fill="none" stroke="#e6301c" stroke-width="1.500"><path d="M1175.500 290V300M1172.500 294L1175.500 300L1178.500 294M1175.500 521V508M1171.500 514L1175.500 508L1179.500 514M477.700 517V508M478 267H486M481 267V272M484 267V272M488 272L491 269V273M497 271H501L499 274M506 271H510M489 286L494 280M480 284L488 280"/></g>
      <path d="M1185 267.200H1192M1185 270.500H1192M487 508H494M487 511.500H494M1185.500 508H1192M1185.500 511.500H1192" stroke="#e6301c" stroke-width="1.800"/>
      <g class="sub-text"><text x="1194" y="275">2</text><text x="496" y="514">4</text><text x="1194" y="514">3</text></g>
      <text class="coord" x="491" y="279">(-80.3,28.6)</text>
      <path d="M482 283C481 281 483 280 484 282L486 285.500C488 283.500 490 285 491 286C492 289 491 292 489 293.500H485L481.500 289C480.500 287.500 482 286.500 483.500 288Z" fill="#fff" stroke="#222" stroke-width=".7"/>
      <path d="M1250 654V641" stroke="#2a8a35" stroke-width="1.600"/><path d="M1247 641.500L1250 634L1253 641.500Z" fill="#1f8a2c"/>
      <path d="M1250 654.500H1264" stroke="#8b1f2a" stroke-width="1.600"/><path d="M1263 652L1271 654.500L1263 657Z" fill="#a3202c"/>
      <circle cx="1250" cy="654.500" r="2.500" fill="#1f2fa5"/>
      <g class="axis-text"><text x="1251.500" y="634">Y</text><text x="1252" y="654">Z</text><text x="1272" y="655">X</text></g>
    </svg>
    <div class="doctabs"><div class="doctab"><svg class="i12"><use href="#logo"/></svg><span>Step1 : 1*</span><button aria-label="Schließen"><svg viewBox="0 0 10 10"><path d="M2.800 2.800L7.200 7.200M7.200 2.800L2.800 7.200" stroke="#fff" stroke-width="1.700"/></svg></button></div></div>
  </section>
</main>

<footer class="status">
  <span>Preselected: Step1.Sketch003.Edge1 (-96.717865,21.077478,50.007999)</span>
  <button class="nav"><svg viewBox="0 0 8 8"><path d="M4 .5L7.500 2V6L4 7.500L.5 6V2Z" fill="#222"/><path d="M4 .5L7.500 2L4 3.800L.5 2Z" fill="#777"/></svg>OpenInventc<i></i></button>
  <span class="dims">228,51 mm x 140,48 mm</span>
</footer>
</body>
</html>
```

FILE: styles.css
```css
* { box-sizing: border-box; }
html, body { height: 100%; }
body {
  margin: 0;
  display: flex;
  flex-direction: column;
  overflow: hidden;
  background: #f0f0f0;
  color: #111;
  font: 7px/12px "Open Sans", "Noto Sans", sans-serif;
}
button, select, input { font: inherit; color: inherit; margin: 0; }
button { padding: 0; border: 0; background: none; white-space: nowrap; }
svg { display: block; flex: none; }
.defs { position: absolute; width: 0; height: 0; }
.i10 { width: 10px; height: 10px; }
.i12 { width: 12px; height: 12px; }

/* icon paint */
.r { fill: url(#redg); stroke: #6b0c0c; stroke-width: 0.8px; }
.rl { fill: none; stroke: #b81414; stroke-width: 2.6px; }
.nf { fill: none; }
.ck { fill: none; stroke: #0b4446; stroke-width: 2px; }
.cl { fill: none; stroke: #2a9a9c; stroke-width: 0.6px; }
.cf { fill: #27cdd0; stroke: #0b4446; stroke-width: 1px; }
.ok { fill: none; stroke: #6a6a6a; stroke-width: 3px; }
.ow { fill: none; stroke: #f4f4f4; stroke-width: 1.4px; }
.gl { fill: none; stroke: #8d8d8d; stroke-width: 1.8px; }
.gd { fill: #8a8a8a; }

/* title and menu */
.titlebar {
  flex: none;
  height: 14px;
  display: flex;
  align-items: center;
  gap: 5px;
  padding-left: 2px;
  border-top: 1px solid #4e5d70;
  background: linear-gradient(#8aa6cb, #b4cbe8);
}
.wbtns { margin-left: auto; display: flex; gap: 2px; align-self: flex-start; padding-right: 1px; }
.wbtns button { width: 20px; height: 11px; border: 1px solid #6d7f98; border-radius: 0 0 2px 2px; background: linear-gradient(#d3dfee, #9fb5d1); }
.wbtns .close { background: linear-gradient(#e59a8c, #c2402c); border-color: #7c3a34; }
.menubar {
  flex: none;
  height: 14px;
  display: flex;
  gap: 12px;
  padding-left: 5px;
  background: linear-gradient(#fbfcfe, #dfe4f3 60%, #d7ddef);
}

/* toolbars */
.toolrow { flex: none; height: 29px; display: flex; background: #f0f0f0; border-bottom: 1px solid #c4c4c4; }
.second { height: 28px; }
.toolbar {
  display: flex;
  align-items: center;
  padding-left: 6px;
  border-right: 1px solid #bdbdbd;
  background: radial-gradient(circle at 1px 1px, #bbb 0.8px, transparent 1px) 3px 3px / 3px 3px repeat-y;
}
.toolbar.last, .second .toolbar { padding-left: 7px; }
.second .toolbar:first-child { padding-left: 6px; }
.toolbar.last { border-right: 0; }
.toolbar button { width: 26px; height: 24px; display: flex; align-items: center; justify-content: center; }
.toolbar button svg { width: 20px; height: 20px; }
.toolbar .drop { width: 8px; }
.drop::before, .nav i { content: ""; border: 3px solid transparent; border-top-color: #111; border-bottom: 0; }
.drop.dim::before { border-top-color: #888; }
.toolbar .more { width: 9px; font-size: 12px; }
.sep { width: 4px; height: 22px; border-left: 1px solid #d2d2d2; }
.bench { position: relative; width: 98px; margin-right: 1px; }
.bench svg { position: absolute; left: 5px; top: 2px; }
.bench select { padding-left: 16px; height: 14px; display: block; }
select {
  appearance: none;
  width: 100%;
  height: 13px;
  padding: 0 1px;
  line-height: 11px;
  border: 1px solid #848484;
  border-radius: 2px;
  background:
    linear-gradient(to bottom left, #111 50%, transparent 50%) right 6px center / 3px 3px no-repeat,
    linear-gradient(to bottom right, #111 50%, transparent 50%) right 3px center / 3px 3px no-repeat,
    linear-gradient(#f2f2f2, #d4d4d4);
}
select:disabled {
  color: #7c7c7c;
  opacity: 1;
  border-color: #b3b3b3;
  background:
    linear-gradient(to bottom left, #888 50%, transparent 50%) right 6px center / 3px 3px no-repeat,
    linear-gradient(to bottom right, #888 50%, transparent 50%) right 3px center / 3px 3px no-repeat,
    #f3f3f3;
}

/* dock */
.work { flex: 1; min-height: 0; display: flex; }
.dock { width: 300px; flex: none; display: flex; flex-direction: column; }
.docktitle { height: 14px; display: flex; align-items: center; justify-content: space-between; padding: 0 1px; background: #d9d9d9; }
.docktitle svg { width: 8px; height: 8px; }
.tabs { display: flex; align-items: flex-end; height: 15px; padding-left: 1px; }
.tabs button { height: 12px; padding: 0 5px; border: 1px solid #a5a5a5; border-bottom: 0; background: linear-gradient(#eee, #d8d8d8); line-height: 11px; }
.tabs .on { height: 14px; padding: 0 7px; background: #fff; line-height: 13px; }
.tabs.bottom { align-items: flex-start; padding-left: 0; }
.tabs.bottom button { border: 1px solid #a5a5a5; border-top: 0; }
.frame { flex: 1; min-height: 0; display: flex; border: 1px solid #a0a0a0; border-width: 1px 1px 2px 2px; }
.tasks {
  flex: 1;
  overflow: hidden;
  display: flex;
  flex-direction: column;
  gap: 7px;
  padding: 12px 5px 0;
  background: linear-gradient(#a8a8c8 0, #32326a 170px);
}
.tasks > * { flex: none; }
.push { height: 14px; line-height: 12px; border: 1px solid #828282; border-radius: 2px; background: linear-gradient(#f6f6f6, #dcdcdc 60%, #d0d0d0); }
.closebtn { width: 48px; align-self: center; margin-bottom: 5px; }
.group h2 {
  height: 16px;
  margin: 0;
  display: flex;
  align-items: center;
  gap: 3px;
  padding: 0 3px 0 6px;
  border-radius: 3px 3px 0 0;
  font-size: 7px;
  color: #1b55b8;
  background: linear-gradient(90deg, #fff, #f4f7fe 35%, #c3cff4);
}
.group .end { margin-left: auto; }
.body { padding: 8px 9px; background: #d5dff7; border: 1px solid #e8eefb; border-top: 0; }
.body p { margin: 0; line-height: 13px; }
.body .msg, .list { font-family: Roboto, sans-serif; font-size: 8px; }
.pair { display: grid; grid-template-columns: 130px 1fr; align-items: center; }
.pair.top { margin-top: 16px; }
.chk { display: flex; align-items: center; gap: 3px; }
.chk.mid { margin: 5px 0 4px; }
.chk.low { margin-top: 3px; }
input[type=checkbox] { appearance: none; width: 9px; height: 9px; border: 1px solid #8a8f99; background: #f0f2f6; flex: none; }
input[type=checkbox]:checked::before { content: ""; display: block; width: 3px; height: 5px; margin-left: 2px; border: solid #27355c; border-width: 0 1px 1px 0; transform: rotate(40deg); }
.list { height: 128px; margin: 0; padding: 1px 2px; list-style: none; border: 1px solid #a0a3aa; background: #fff; }
.list li, .list label { display: flex; align-items: center; height: 12px; gap: 4px; }
.elems { margin: 4px 0; }
.scroll { width: 12px; display: flex; flex-direction: column; background: #ececec; border-left: 1px solid #fff; }
.scroll button { height: 12px; display: flex; align-items: center; justify-content: center; }
.scroll button::before { content: ""; border: 2px solid transparent; }
.scroll .up::before { border-top: 0; border-bottom: 3px solid #222; }
.scroll .down::before { border-bottom: 0; border-top: 3px solid #222; }
.thumb { flex: 1; margin: 0 1px 34px; border: 1px solid #a5a5a5; background: linear-gradient(90deg, #f3f3f3, #c8c8c8); }
.split { width: 4px; position: relative; left: -10px; display: flex; flex-direction: column; gap: 1px; justify-content: center; pointer-events: none; }
.split i { height: 1px; background: #333; }

/* 3D view */
.mdi { flex: 1; min-width: 0; display: flex; flex-direction: column; }
.canvas { flex: 1; min-height: 0; width: 100%; background: linear-gradient(#323265, #9696ab); }
.dim-text { font: 15px "Liberation Sans", sans-serif; fill: #d8272b; }
.coord { font: 11px "Liberation Mono", monospace; fill: #2a25d0; }
.sub-text { font: bold 8px "Liberation Sans", sans-serif; fill: #e6301c; }
.axis-text { font: 6px "Liberation Sans", sans-serif; fill: #222; }
.doctabs { height: 15px; }
.doctab { width: 76px; height: 16px; display: flex; align-items: center; gap: 2px; padding-left: 6px; border: 1px solid #aaa; border-top: 0; background: #fff; font-family: Roboto, sans-serif; font-size: 8px; }
.doctab button svg { width: 10px; height: 10px; background: #dc6a4c; border-radius: 2px; }

/* status */
.status { flex: none; height: 20px; display: flex; align-items: center; padding: 0 1px 0 4px; }
.nav { margin-left: auto; display: flex; align-items: center; gap: 4px; height: 14px; padding-right: 5px; border-right: 1px solid #ccc; }
.nav svg { width: 8px; height: 8px; }
.nav i { margin-left: -3px; }
.dims { padding-left: 4px; }
```
